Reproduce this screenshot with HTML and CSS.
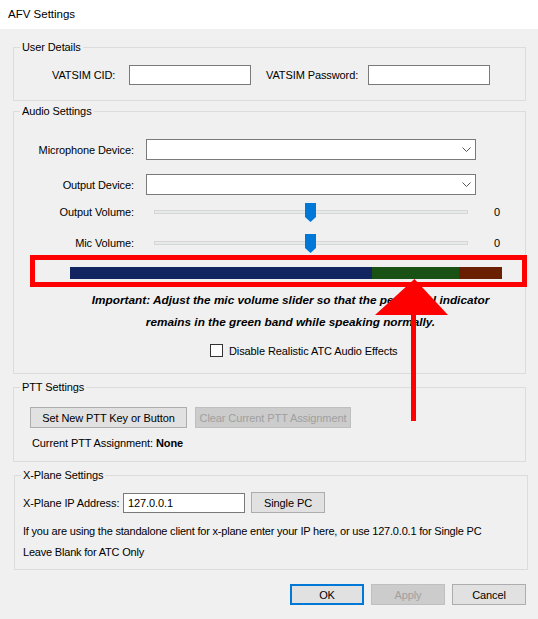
FILE: index.html
```html
<!DOCTYPE html>
<html>
<head>
<meta charset="utf-8">
<title>AFV Settings</title>
<link rel="stylesheet" href="styles.css">
</head>
<body>
<div class="titlebar">AFV Settings</div>
<div class="client">
  <div class="group g-user">
    <div class="legend">User Details</div>
    <div class="user-row">
      <span class="lbl-cid">VATSIM CID:</span>
      <span class="textbox tb-user"></span>
      <span class="lbl-pw">VATSIM Password:</span>
      <span class="textbox tb-user"></span>
    </div>
  </div>

  <div class="group g-audio">
    <div class="legend">Audio Settings</div>
    <div class="arow r-mic">
      <span class="arow-lbl">Microphone Device:</span>
      <span class="combo"><svg class="chev" width="9" height="5" viewBox="0 0 9 5"><polyline points="0.5,0.5 4.5,4.5 8.5,0.5" fill="none" stroke="#555" stroke-width="1"/></svg></span>
    </div>
    <div class="arow r-out">
      <span class="arow-lbl">Output Device:</span>
      <span class="combo"><svg class="chev" width="9" height="5" viewBox="0 0 9 5"><polyline points="0.5,0.5 4.5,4.5 8.5,0.5" fill="none" stroke="#555" stroke-width="1"/></svg></span>
    </div>
    <div class="arow r-ovol">
      <span class="arow-lbl">Output Volume:</span>
      <span class="slider"><span class="track"></span><svg class="thumb" width="11" height="19" viewBox="0 0 11 19"><polygon points="0,0 11,0 11,14 5.5,19 0,14" fill="#0078d7"/></svg></span>
      <span class="val">0</span>
    </div>
    <div class="arow r-mvol">
      <span class="arow-lbl">Mic Volume:</span>
      <span class="slider"><span class="track"></span><svg class="thumb" width="11" height="19" viewBox="0 0 11 19"><polygon points="0,0 11,0 11,14 5.5,19 0,14" fill="#0078d7"/></svg></span>
      <span class="val">0</span>
    </div>
    <div class="meter">
      <span class="seg seg-low"></span>
      <span class="seg seg-mid"></span>
      <span class="seg seg-high"></span>
    </div>
    <div class="important">Important: Adjust the mic volume slider so that the peak level indicator<br>remains in the green band while speaking normally.</div>
    <div class="chk-row">
      <span class="chk"></span>
      <span class="chk-lbl">Disable Realistic ATC Audio Effects</span>
    </div>
  </div>

  <div class="group g-ptt">
    <div class="legend">PTT Settings</div>
    <div class="ptt-btns">
      <span class="btn btn-set">Set New PTT Key or Button</span>
      <span class="btn btn-clear">Clear Current PTT Assignment</span>
    </div>
    <div class="ptt-cur">Current PTT Assignment: <b>None</b></div>
  </div>

  <div class="group g-xp">
    <div class="legend">X-Plane Settings</div>
    <div class="xp-row">
      <span class="xp-lbl">X-Plane IP Address:</span>
      <span class="textbox tb-ip">127.0.0.1</span>
      <span class="btn btn-single">Single PC</span>
    </div>
    <div class="xp-text xp-text1">If you are using the standalone client for x-plane enter your IP here, or use 127.0.0.1 for Single PC</div>
    <div class="xp-text">Leave Blank for ATC Only</div>
  </div>

  <div class="bottom">
    <span class="btn bbtn btn-ok">OK</span>
    <span class="btn bbtn btn-dis">Apply</span>
    <span class="btn bbtn">Cancel</span>
  </div>
</div>

<div class="highlight"></div>
<svg class="arrow" width="85" height="150" viewBox="0 0 85 150">
  <polygon points="44.5,4 5,40 78,40" fill="#ff0000"/>
  <rect x="41" y="39" width="5" height="107" fill="#ff0000"/>
</svg>
</body>
</html>
```

FILE: styles.css
```css
* { box-sizing: border-box; }
html, body { margin: 0; padding: 0; }
body {
  width: 538px;
  height: 619px;
  background: #f0f0f0;
  font-family: "Liberation Sans", Arial, sans-serif;
  font-size: 11px;
  letter-spacing: -0.1px;
  color: #000;
  position: relative;
  overflow: hidden;
}
.titlebar {
  height: 29px;
  background: #fff;
  line-height: 29px;
  padding-left: 8px;
  font-size: 11.5px;
  letter-spacing: 0;
}
.client { padding: 18px 12px 0 13px; }

.group { border: 1px solid #dcdcdc; }
.legend {
  width: fit-content;
  margin: -8px 0 0 6px;
  padding: 0 2px;
  height: 14px;
  line-height: 14px;
  background: #f0f0f0;
}

.textbox {
  display: block;
  background: #fff;
  border: 1px solid #7a7a7a;
}

/* User details */
.g-user { height: 54px; }
.user-row { display: flex; align-items: center; height: 20px; margin-top: 11px; }
.lbl-cid { margin-left: 38px; width: 77px; }
.lbl-pw { margin-left: 15px; width: 102px; }
.tb-user { width: 122px; height: 20px; }

/* Audio */
.g-audio { height: 263px; margin-top: 10px; }
.arow { display: flex; align-items: center; }
.arow-lbl { width: 120px; text-align: right; }
.combo {
  margin-left: 12px;
  width: 330px;
  height: 21px;
  background: #fff;
  border: 1px solid #7a7a7a;
  display: flex;
  justify-content: flex-end;
  align-items: center;
  padding-right: 4px;
}
.chev { display: block; }
.r-mic { margin-top: 21px; height: 21px; }
.r-out { margin-top: 14px; height: 21px; }
.r-ovol { margin-top: 7px; height: 20px; }
.r-mvol { margin-top: 11px; height: 20px; }
.slider { margin-left: 20px; width: 314px; height: 20px; position: relative; }
.track {
  position: absolute;
  left: 0; right: 0; top: 8px;
  height: 4px;
  background: #e7eaea;
  border: 1px solid #d6d6d6;
}
.thumb { position: absolute; left: 151px; top: 1px; display: block; }
.val { margin-left: 26px; }

.meter { display: flex; margin: 14px 0 0 56px; width: 432px; height: 12px; }
.seg { display: block; height: 12px; }
.seg-low { width: 302px; background: #132560; }
.seg-mid { width: 87px; background: #1a5216; }
.seg-high { width: 43px; background: #6a1e02; }

.important {
  margin: 10px 0 0 42px;
  text-align: center;
  font-weight: bold;
  font-style: italic;
  font-size: 11.8px;
  letter-spacing: 0;
  line-height: 22px;
}
.chk-row { display: flex; align-items: center; margin: 11px 0 0 196px; height: 13px; }
.chk { width: 13px; height: 13px; border: 1px solid #333; background: #fff; }
.chk-lbl { margin-left: 6px; }

/* Buttons */
.btn {
  height: 21px;
  background: #e1e1e1;
  border: 1px solid #adadad;
  display: flex;
  align-items: center;
  justify-content: center;
  white-space: nowrap;
}

/* PTT */
.g-ptt { height: 75px; margin-top: 13px; }
.ptt-btns { display: flex; margin: 13px 0 0 16px; }
.btn-set { width: 157px; }
.btn-clear { width: 156px; margin-left: 8px; background: #cccccc; border-color: #bfbfbf; color: #a0a0a0; }
.ptt-cur { margin: 8px 0 0 18px; line-height: 14px; }

/* X-Plane */
.g-xp { height: 95px; margin: 13px 0 0 1px; width: 514px; }
.xp-row { display: flex; align-items: center; margin: 10px 0 0 8px; height: 21px; }
.xp-lbl { width: 100px; }
.tb-ip { width: 122px; height: 20px; padding-left: 4px; line-height: 18px; }
.btn-single { width: 74px; margin-left: 6px; }
.xp-text { margin-left: 8px; line-height: 21px; letter-spacing: -0.2px; }
.xp-text1 { margin-top: 8px; }

/* Bottom */
.bottom { display: flex; justify-content: flex-end; gap: 7px; margin-top: 14px; }
.bbtn { width: 74px; }
.btn-ok { border: 2px solid #0078d7; }
.btn-dis { background: #cccccc; border-color: #bfbfbf; color: #a0a0a0; }

/* Annotation overlays */
.highlight {
  position: absolute;
  left: 30px;
  top: 255px;
  width: 497px;
  height: 32px;
  border: 5px solid #ff0000;
}
.arrow { position: absolute; left: 370px; top: 275px; display: block; }
```
